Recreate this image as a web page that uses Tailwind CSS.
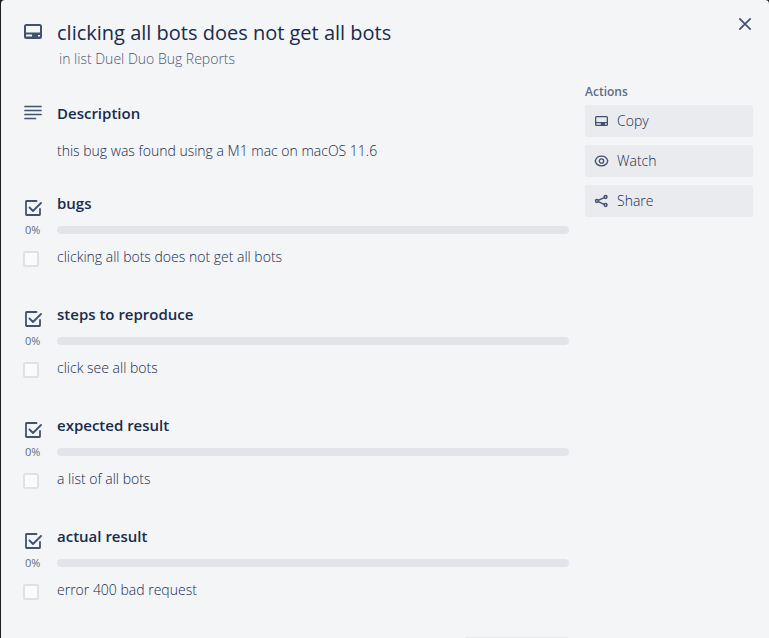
<!DOCTYPE html>
<html lang="en">
<head>
<meta charset="utf-8">
<title>clicking all bots does not get all bots</title>
<script src="https://cdn.jsdelivr.net/npm/@tailwindcss/browser@4"></script>
</head>
<body class="h-screen overflow-hidden bg-[#1d1d22] pl-px font-['Open_Sans','Noto_Sans',sans-serif] text-sm leading-5 font-light text-[#172b4d]">
<svg class="hidden" aria-hidden="true">
  <symbol id="card" viewBox="0 0 18 15"><path fill="currentColor" fill-rule="evenodd" d="M2.500 0h13A2.500 2.500 0 0 1 18 2.500v10a2.500 2.500 0 0 1-2.500 2.500h-13A2.500 2.500 0 0 1 0 12.500v-10A2.500 2.500 0 0 1 2.500 0zM2 2v6.500h14V2zM2.500 10.500a.5.500 0 0 0-.500.500v1a.5.500 0 0 0 .500.500h5a.5.500 0 0 0 .500-.500v-1a.5.500 0 0 0-.500-.500zM14 11v1.500h2V11z"/></symbol>
  <symbol id="check" viewBox="0 0 18 18"><path fill="none" stroke="currentColor" stroke-width="1.800" stroke-linecap="round" stroke-linejoin="round" d="M12.500 2H2.500A.5.500 0 0 0 2 2.500v13a.5.500 0 0 0 .500.500h13a.5.500 0 0 0 .500-.500V10M5.500 8.500l3.500 3.500 8-8"/></symbol>
</svg>
<main class="h-full overflow-hidden rounded-t-sm bg-[#f4f5f7]">
  <header class="flex items-start pt-4 pl-[23px] text-[#42526e]">
    <svg class="mt-2 h-[15px] w-[18px] shrink-0" aria-hidden="true"><use href="#card"/></svg>
    <div class="ml-[15px] flex-1">
      <h1 class="pt-px text-xl leading-8 font-medium text-[#172b4d]">clicking all bots does not get all bots</h1>
      <p class="pl-0.5 text-[#4a5974]">in list Duel Duo Bug Reports</p>
    </div>
    <button type="button" aria-label="Close" class="mr-4 flex size-4 items-center justify-center">
      <svg class="size-[14px]" viewBox="0 0 14 14" fill="none" stroke="currentColor" stroke-width="1.7" stroke-linecap="round"><path d="M1.800 1.800l10.400 10.400M12.200 1.800L1.800 12.200"/></svg>
    </button>
  </header>
  <div class="flex gap-4 pr-4 pl-[22px]">
    <div class="min-w-0 flex-1 pt-7">
      <section class="mb-[27px]">
        <div class="flex h-8 items-center">
          <svg class="ml-px h-4 w-[18px] text-[#42526e]" viewBox="0 0 18 16" fill="none" stroke="currentColor" stroke-width="1.700" stroke-linecap="round" aria-hidden="true"><path d="M1 1.500h16M1 5.500h16M1 9.500h16M1 13.500h10.500"/></svg>
          <h2 class="ml-[15px] text-[15px] font-semibold">Description</h2>
        </div>
        <p class="mt-3 pl-[34px]">this bug was found using a M1 mac on macOS 11.6</p>
      </section>

      <section class="mb-8">
        <div class="flex h-8 items-center"><svg class="mt-2 ml-px size-[18px] text-[#42526e]" aria-hidden="true"><use href="#check"/></svg><h2 class="ml-[15px] pb-0.5 text-[15px] font-semibold">bugs</h2></div>
        <div class="flex h-5 items-center"><span class="w-[34px] pl-0.5 text-[11px] font-normal text-[#5e6c84]">0%</span><div role="progressbar" aria-valuenow="0" aria-label="bugs" class="h-2 flex-1 rounded-full bg-[#e2e4e9]"></div></div>
        <label class="mt-[7px] flex"><input type="checkbox" class="mt-1 size-4 appearance-none rounded-xs border-2 border-[#dfe1e6] bg-[#fafbfc]"><span class="ml-[18px]">clicking all bots does not get all bots</span></label>
      </section>

      <section class="mb-8">
        <div class="flex h-8 items-center"><svg class="mt-2 ml-px size-[18px] text-[#42526e]" aria-hidden="true"><use href="#check"/></svg><h2 class="ml-[15px] pb-0.5 text-[15px] font-semibold">steps to reproduce</h2></div>
        <div class="flex h-5 items-center"><span class="w-[34px] pl-0.5 text-[11px] font-normal text-[#5e6c84]">0%</span><div role="progressbar" aria-valuenow="0" aria-label="steps to reproduce" class="h-2 flex-1 rounded-full bg-[#e2e4e9]"></div></div>
        <label class="mt-[7px] flex"><input type="checkbox" class="mt-1 size-4 appearance-none rounded-xs border-2 border-[#dfe1e6] bg-[#fafbfc]"><span class="ml-[18px]">click see all bots</span></label>
      </section>

      <section class="mb-8">
        <div class="flex h-8 items-center"><svg class="mt-2 ml-px size-[18px] text-[#42526e]" aria-hidden="true"><use href="#check"/></svg><h2 class="ml-[15px] pb-0.5 text-[15px] font-semibold">expected result</h2></div>
        <div class="flex h-5 items-center"><span class="w-[34px] pl-0.5 text-[11px] font-normal text-[#5e6c84]">0%</span><div role="progressbar" aria-valuenow="0" aria-label="expected result" class="h-2 flex-1 rounded-full bg-[#e2e4e9]"></div></div>
        <label class="mt-[7px] flex"><input type="checkbox" class="mt-1 size-4 appearance-none rounded-xs border-2 border-[#dfe1e6] bg-[#fafbfc]"><span class="ml-[18px]">a list of all bots</span></label>
      </section>

      <section>
        <div class="flex h-8 items-center"><svg class="mt-2 ml-px size-[18px] text-[#42526e]" aria-hidden="true"><use href="#check"/></svg><h2 class="ml-[15px] pb-0.5 text-[15px] font-semibold">actual result</h2></div>
        <div class="flex h-5 items-center"><span class="w-[34px] pl-0.5 text-[11px] font-normal text-[#5e6c84]">0%</span><div role="progressbar" aria-valuenow="0" aria-label="actual result" class="h-2 flex-1 rounded-full bg-[#e2e4e9]"></div></div>
        <label class="mt-[7px] flex"><input type="checkbox" class="mt-1 size-4 appearance-none rounded-xs border-2 border-[#dfe1e6] bg-[#fafbfc]"><span class="ml-[18px]">error 400 bad request</span></label>
      </section>

      <div class="flex justify-end pt-[37px]"><button type="button" aria-label="Details" class="h-8 w-[104px] rounded-xs bg-[#eaebee]"></button></div>
    </div>

    <aside class="w-[168px] pt-[13px]">
      <h3 class="text-xs leading-5 font-semibold text-[#5e6c84]">Actions</h3>
      <div class="mt-[3px] flex flex-col gap-2">
        <button type="button" class="flex h-8 items-center gap-2 rounded-[3px] bg-[#eaebef] pl-[9px]">
          <svg class="h-[14px] w-[15px] text-[#42526e]" viewBox="0 0 15 14"><path fill="currentColor" fill-rule="evenodd" d="M2.500 2h10A1.500 1.500 0 0 1 14 3.500v7a1.500 1.500 0 0 1-1.500 1.500h-10A1.500 1.500 0 0 1 1 10.500v-7A1.500 1.500 0 0 1 2.500 2zM2.300 3.300v4.700h10.400V3.300zM2.300 9.300v1.400h4.500V9.300zM11 9.300v1.400h1.700V9.300z"/></svg>Copy</button>
        <button type="button" class="flex h-8 items-center gap-2 rounded-[3px] bg-[#eaebef] pl-[9px]">
          <svg class="h-[14px] w-[15px] text-[#42526e]" viewBox="0 0 15 14" fill="none" stroke="currentColor" stroke-width="1.300"><path d="M1.200 7C2.200 3.500 4.800 2.200 7.500 2.200S12.800 3.500 13.800 7C12.800 10.500 10.200 11.800 7.500 11.800S2.200 10.500 1.200 7z"/><circle cx="7.500" cy="7" r="2.200"/></svg>Watch</button>
        <button type="button" class="flex h-8 items-center gap-2 rounded-[3px] bg-[#eaebef] pl-[9px]">
          <svg class="h-[14px] w-[15px] text-[#42526e]" viewBox="0 0 15 14" fill="none" stroke="currentColor" stroke-width="1.500"><circle cx="2.900" cy="7" r="1.400"/><circle cx="11.600" cy="3" r="1.400"/><circle cx="11.600" cy="11" r="1.400"/><path d="M4.200 6.400l6-2.800M4.200 7.600l6 2.800"/></svg>Share</button>
      </div>
    </aside>
  </div>
</main>
</body>
</html>
